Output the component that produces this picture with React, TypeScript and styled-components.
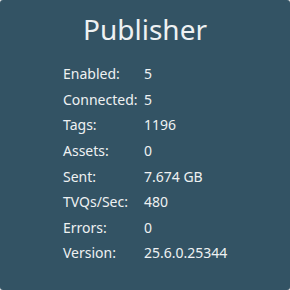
import React from 'react';
import styled, { createGlobalStyle } from 'styled-components';

const GlobalStyle = createGlobalStyle`
  html, body {
    margin: 0;
    padding: 0;
    background: #e9e9e9;
  }
`;

const Card = styled.div`
  box-sizing: border-box;
  width: 290px;
  height: 290px;
  background: #335364;
  border-radius: 3px;
  color: #eef1f2;
  font-family: 'Noto Sans', 'Open Sans', sans-serif;
  padding-top: 10px;
`;

const Title = styled.h1`
  margin: 0;
  text-align: center;
  font-size: 28px;
  font-weight: 400;
  line-height: 38px;
`;

const StatsGrid = styled.dl`
  display: grid;
  grid-template-columns: 81px auto;
  grid-auto-rows: 25.6px;
  align-items: center;
  margin: 13px 0 0 63px;
  font-size: 14px;
`;

const Label = styled.dt`
  margin: 0;
`;

const Value = styled.dd`
  margin: 0;
`;

const stats: [string, string][] = [
  ['Enabled:', '5'],
  ['Connected:', '5'],
  ['Tags:', '1196'],
  ['Assets:', '0'],
  ['Sent:', '7.674 GB'],
  ['TVQs/Sec:', '480'],
  ['Errors:', '0'],
  ['Version:', '25.6.0.25344'],
];

const App: React.FC = (): JSX.Element => (
  <>
    <GlobalStyle />
    <Card>
      <Title>Publisher</Title>
      <StatsGrid>
        {stats.map(([label, value]) => (
          <React.Fragment key={label}>
            <Label>{label}</Label>
            <Value>{value}</Value>
          </React.Fragment>
        ))}
      </StatsGrid>
    </Card>
  </>
);

export default App;
